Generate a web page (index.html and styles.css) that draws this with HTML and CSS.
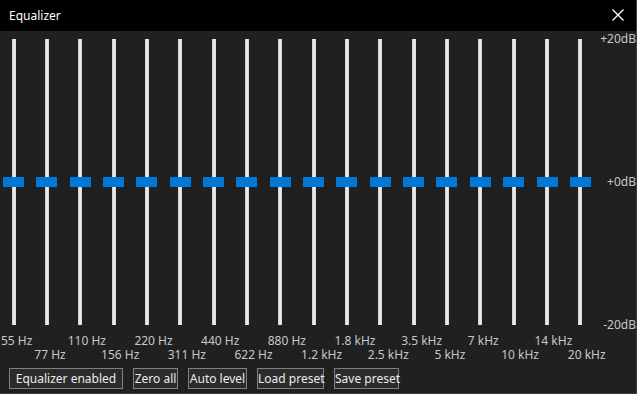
FILE: index.html
```html
<!DOCTYPE html>
<html lang="en">
<head>
    <meta charset="UTF-8">
    <title>Equalizer</title>
    <link rel="stylesheet" href="styles.css">
</head>
<body>
    <div class="window">
        <header class="titlebar">
            <span class="title">Equalizer</span>
            <svg class="close" width="12" height="12" viewBox="0 0 12 12">
                <path d="M0.5 0.5 L11.5 11.5 M11.5 0.5 L0.5 11.5" stroke="#fff" stroke-width="1.3" fill="none"/>
            </svg>
        </header>

        <div class="main">
            <div class="bands">
                <div class="sliders">
                    <div class="slider"><div class="track"></div><div class="thumb"></div></div>
                    <div class="slider"><div class="track"></div><div class="thumb"></div></div>
                    <div class="slider"><div class="track"></div><div class="thumb"></div></div>
                    <div class="slider"><div class="track"></div><div class="thumb"></div></div>
                    <div class="slider"><div class="track"></div><div class="thumb"></div></div>
                    <div class="slider"><div class="track"></div><div class="thumb"></div></div>
                    <div class="slider"><div class="track"></div><div class="thumb"></div></div>
                    <div class="slider"><div class="track"></div><div class="thumb"></div></div>
                    <div class="slider"><div class="track"></div><div class="thumb"></div></div>
                    <div class="slider"><div class="track"></div><div class="thumb"></div></div>
                    <div class="slider"><div class="track"></div><div class="thumb"></div></div>
                    <div class="slider"><div class="track"></div><div class="thumb"></div></div>
                    <div class="slider"><div class="track"></div><div class="thumb"></div></div>
                    <div class="slider"><div class="track"></div><div class="thumb"></div></div>
                    <div class="slider"><div class="track"></div><div class="thumb"></div></div>
                    <div class="slider"><div class="track"></div><div class="thumb"></div></div>
                    <div class="slider"><div class="track"></div><div class="thumb"></div></div>
                    <div class="slider"><div class="track"></div><div class="thumb"></div></div>
                </div>

                <!-- frequency labels, alternating rows -->
                <div class="freqs freqs-top">
                    <span>55 Hz</span><span></span>
                    <span>110 Hz</span><span></span>
                    <span>220 Hz</span><span></span>
                    <span>440 Hz</span><span></span>
                    <span>880 Hz</span><span></span>
                    <span>1.8 kHz</span><span></span>
                    <span>3.5 kHz</span><span></span>
                    <span>7 kHz</span><span></span>
                    <span>14 kHz</span><span></span>
                </div>
                <div class="freqs">
                    <span></span><span>77 Hz</span>
                    <span></span><span>156 Hz</span>
                    <span></span><span>311 Hz</span>
                    <span></span><span>622 Hz</span>
                    <span></span><span>1.2 kHz</span>
                    <span></span><span>2.5 kHz</span>
                    <span></span><span>5 kHz</span>
                    <span></span><span>10 kHz</span>
                    <span></span><span>20 kHz</span>
                </div>
            </div>

            <div class="scale">
                <span>+20dB</span>
                <span>+0dB</span>
                <span>-20dB</span>
            </div>
        </div>

        <div class="buttons">
            <button class="btn-enabled">Equalizer enabled</button>
            <button class="btn-zero">Zero all</button>
            <button class="btn-auto">Auto level</button>
            <button class="btn-load">Load preset</button>
            <button class="btn-save">Save preset</button>
        </div>
    </div>
</body>
</html>
```

FILE: styles.css
```css
body {
    margin: 0;
    background-color: #202020;
    font-family: "Noto Sans", "Open Sans", sans-serif;
    font-size: 12px;
    overflow: hidden;
}
.window {
    width: 636px;
    height: 393px;
    border-right: 1px solid #3c3c3c;
    border-bottom: 1px solid #3c3c3c;
    background-color: #202020;
}
.titlebar {
    height: 31px;
    background-color: #000;
    color: #fff;
    display: flex;
    align-items: center;
    padding: 0 12px 0 9px;
}
.title {
    flex: 1;
    margin-top: -1px;
}
.close {
    margin-top: -1px;
}

.main {
    display: flex;
    padding-top: 8px;
}
.bands {
    width: 588px;
    padding-left: 3px;
}
.sliders {
    display: flex;
    justify-content: space-between;
    height: 286px;
}
.slider {
    width: 21px;
    position: relative;
    display: flex;
    justify-content: center;
}
.track {
    width: 4px;
    height: 100%;
    background: linear-gradient(to right, #c8c8c8, #f2f2f2 50%, #d0d0d0);
}
.thumb {
    position: absolute;
    left: 0;
    top: 138px;
    width: 21px;
    height: 10px;
    background-color: #0078d7;
}

/* labels start just left of each thumb */
.freqs {
    display: flex;
    justify-content: space-between;
    height: 14px;
    line-height: 14px;
    margin: 0 2px 0 -2px;
    color: #c4c8cc;
}
.freqs-top {
    margin-top: 9px;
}
.freqs span {
    width: 21px;
    white-space: nowrap;
}

.scale {
    flex: 1;
    display: flex;
    flex-direction: column;
    justify-content: space-between;
    align-items: flex-end;
    height: 300px;
    margin-top: -7px;
    line-height: 14px;
    color: #c4c8cc;
}

.buttons {
    display: flex;
    gap: 10px;
    padding: 6px 0 0 9px;
}
button {
    height: 21px;
    padding: 0;
    font-family: inherit;
    font-size: 12px;
    line-height: 18px;
    white-space: nowrap;
    color: #ececec;
    background-color: #2b2b2b;
    border: 1px solid #808080;
    border-radius: 0;
}
.btn-enabled { width: 114px; }
.btn-zero { width: 45px; }
.btn-auto { width: 59px; }
.btn-load { width: 67px; }
.btn-save { width: 65px; }
```
